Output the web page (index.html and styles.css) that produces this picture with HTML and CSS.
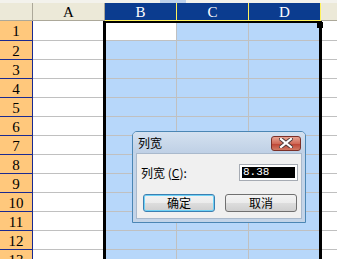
FILE: index.html
```html
<!DOCTYPE html>
<html lang="zh-CN">
<head>
  <meta charset="UTF-8" />
  <title>列宽</title>
  <link rel="stylesheet" href="styles.css">
</head>
<body>
  <div class="sheet">
    <div class="topstrip"><span class="strip-blue"></span></div>
    <div class="grid" id="grid">
      <div class="corner"></div>
      <div class="colhead">A</div>
      <div class="colhead sel">B</div>
      <div class="colhead sel">C</div>
      <div class="colhead sel">D</div>
      <div class="colhead"></div>
    </div>

    <div class="selection"><span class="handle"></span></div>

    <div class="dialog">
      <div class="titlebar">
        <span class="title">列宽</span>
        <span class="close">
          <svg width="14" height="10" viewBox="0 0 14 10">
            <path d="M2 1 L12 9 M12 1 L2 9" stroke="#4a3a3a" stroke-width="4" stroke-linecap="square"/>
            <path d="M2 1 L12 9 M12 1 L2 9" stroke="#ffffff" stroke-width="2.2" stroke-linecap="square"/>
          </svg>
        </span>
      </div>
      <div class="dialog-body">
        <div class="field-row">
          <label class="field-label">列宽 (<u>C</u>):</label>
          <div class="field-input"><span class="field-value">8.38</span></div>
        </div>
        <div class="button-row">
          <button class="btn default">确定</button>
          <button class="btn">取消</button>
        </div>
      </div>
    </div>
  </div>

  <script>
    const grid = document.getElementById("grid");
    for (let r = 1; r <= 13; r++) {
      let html = '<div class="rowhead">' + r + '</div>';
      html += '<div class="cell"></div>';
      html += '<div class="cell sel' + (r === 1 ? ' active' : '') + '"></div>';
      html += '<div class="cell sel"></div>';
      html += '<div class="cell sel"></div>';
      html += '<div class="cell"></div>';
      grid.insertAdjacentHTML("beforeend", html);
    }
  </script>
</body>
</html>
```

FILE: styles.css
```css
body {
  margin: 0;
  padding: 0;
  background: #ffffff;
  overflow: hidden;
}
.sheet {
  position: relative;
  width: 337px;
  height: 259px;
  overflow: hidden;
  font-family: "Liberation Serif", serif;
}
.topstrip {
  height: 3px;
  background: #f3f2ec;
  display: flex;
}
.strip-blue {
  margin-left: 160px;
  width: 26px;
  background: #bcd0ea;
}
.grid {
  display: grid;
  grid-template-columns: 33px 72px 72px 72px 72px 72px;
  grid-template-rows: 18px 20px repeat(12, 19px);
}
.grid > div {
  box-sizing: border-box;
}
.corner {
  background: #ece9d8;
  border-right: 1px solid #aca899;
  border-bottom: 1px solid #aca899;
}
.colhead {
  background: #ece9d8;
  border-right: 1px solid #aca899;
  border-bottom: 1px solid #aca899;
  text-align: center;
  font-size: 15px;
  line-height: 19px;
  color: #000;
}
.colhead.sel {
  background: #0b3c8f;
  color: #ffffff;
  border-right-color: #fff25c;
  border-bottom-color: #fff25c;
}
.rowhead {
  background: #ffc87c;
  border-right: 1px solid #1a2a90;
  border-bottom: 1px solid #1a2a90;
  text-align: center;
  font-size: 15px;
  line-height: 21px;
  color: #000;
}
.cell {
  background: #ffffff;
  border-right: 1px solid #c0c0c0;
  border-bottom: 1px solid #c0c0c0;
}
.cell.sel {
  background: #b7d7fa;
}
.cell.active {
  background: #ffffff;
}

/* selection outline drawn over the cells */
.selection {
  position: absolute;
  left: 103px;
  top: 21px;
  width: 219px;
  height: 260px;
  box-sizing: border-box;
  border: 3px solid #000;
  border-top-width: 2px;
  border-bottom: none;
}
.handle {
  position: absolute;
  left: 211px;
  top: -1px;
  width: 6px;
  height: 6px;
  background: #000;
}

/* dialog */
.dialog {
  position: absolute;
  left: 132px;
  top: 131px;
  width: 174px;
  height: 92px;
  box-sizing: border-box;
  border: 1px solid #4b86b4;
  border-radius: 5px 5px 0 0;
  background: #c3d4e8;
  padding: 0 3px 3px 3px;
  display: flex;
  flex-direction: column;
  font-family: "Noto Sans CJK SC", sans-serif;
  font-size: 12px;
}
.titlebar {
  height: 21px;
  display: flex;
  align-items: center;
  justify-content: space-between;
  background: linear-gradient(#d4e1f0, #bfd0e5);
  margin: 0 -3px;
  padding: 0 4px 0 5px;
  border-radius: 4px 4px 0 0;
}
.title {
  color: #000;
  font-size: 12px;
  margin-top: -1px;
}
.close {
  width: 30px;
  height: 15px;
  box-sizing: border-box;
  border: 1px solid #7b3028;
  border-radius: 3px;
  background: linear-gradient(#e7a493, #d06a58 50%, #be4636 55%, #d07a64);
  display: flex;
  align-items: center;
  justify-content: center;
  margin-top: 1px;
}
.dialog-body {
  flex: 1;
  background: #f0f0f0;
  border: 1px solid #a9b9cc;
  padding: 10px 3px 0 4px;
}
.field-row {
  display: flex;
  align-items: center;
  justify-content: space-between;
  height: 17px;
}
.field-label {
  color: #000;
}
.field-input {
  width: 59px;
  height: 17px;
  box-sizing: border-box;
  border: 1px solid #a6abb3;
  background: #ffffff;
  padding: 2px;
}
.field-value {
  display: block;
  height: 11px;
  background: #000;
  color: #fff;
  font-family: "Liberation Mono", monospace;
  font-size: 11px;
  line-height: 11px;
  padding-left: 1px;
}
.button-row {
  display: flex;
  gap: 10px;
  margin-top: 13px;
  padding-left: 2px;
}
.btn {
  width: 72px;
  height: 18px;
  box-sizing: border-box;
  border: 1px solid #707070;
  border-radius: 3px;
  background: linear-gradient(#f3f3f3, #ebebeb 50%, #dddddd 51%, #cfcfcf);
  font-family: "Noto Sans CJK SC", sans-serif;
  font-size: 12px;
  line-height: 14px;
  padding: 0;
  color: #000;
}
.btn.default {
  border-color: #3c7fb1;
  box-shadow: inset 0 0 0 1px #6fd2f6;
}
```
